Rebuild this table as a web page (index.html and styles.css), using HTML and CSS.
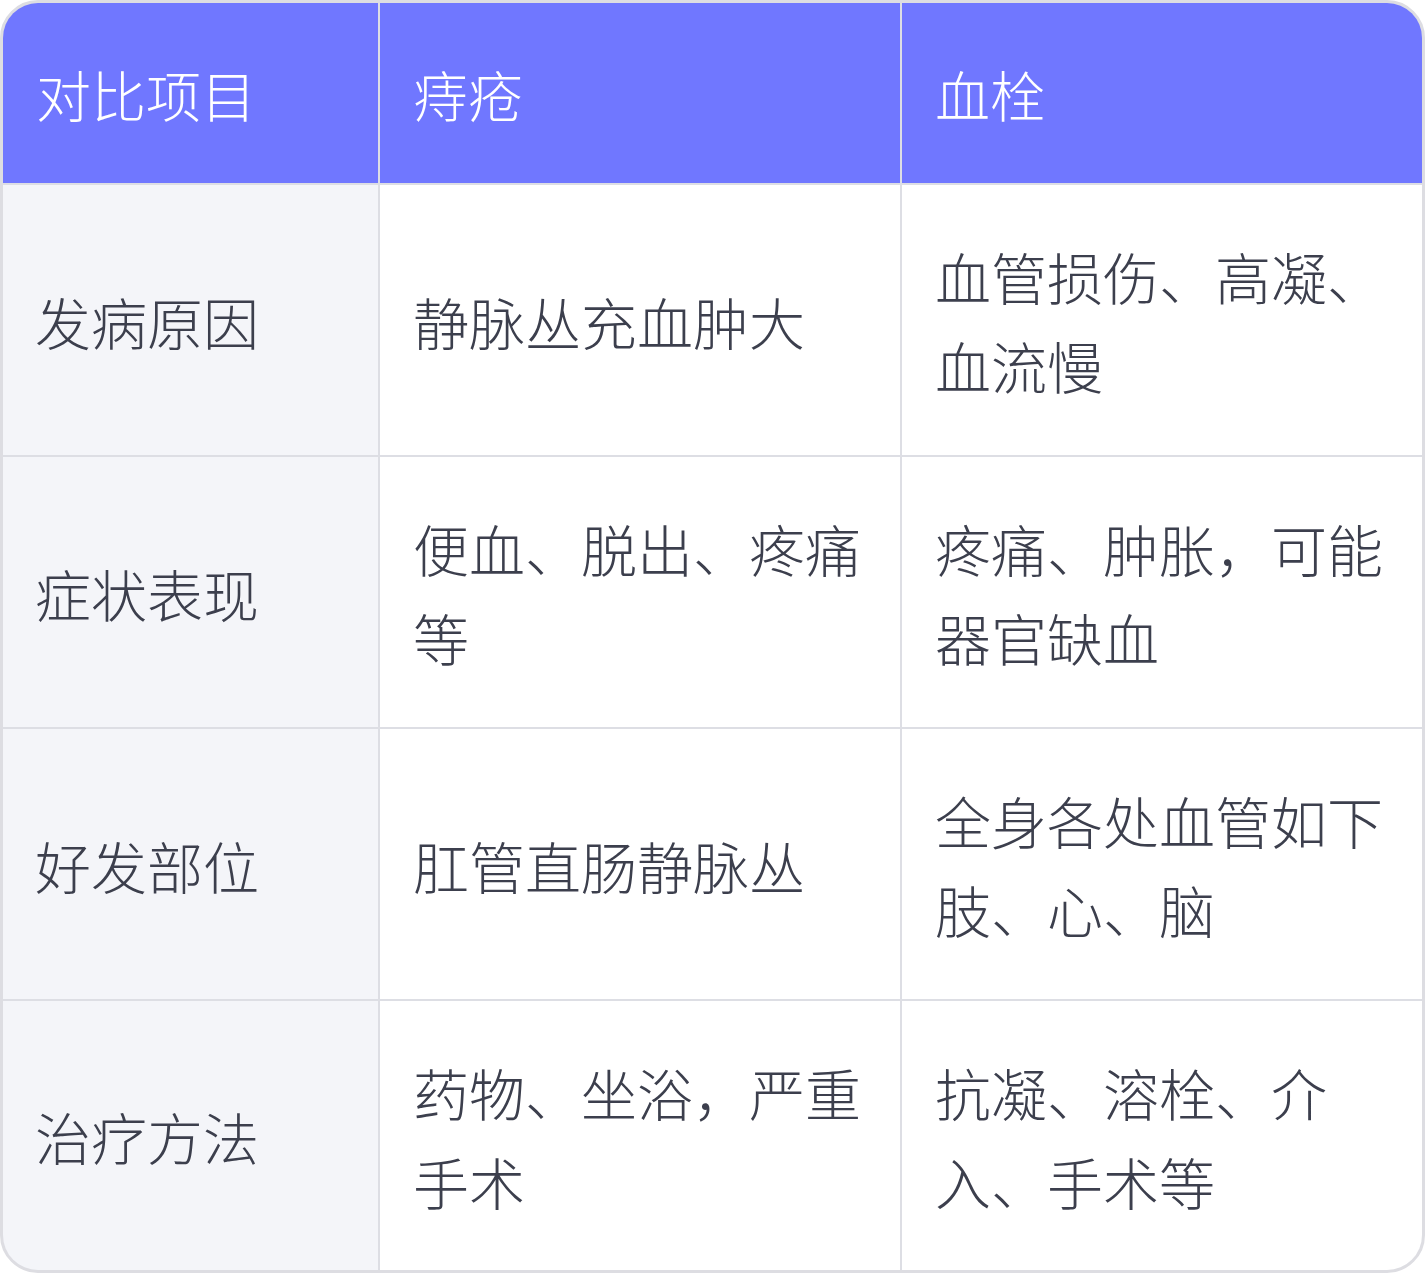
FILE: index.html
```html
<!DOCTYPE html>
<html lang="zh-CN">
<head>
<meta charset="utf-8">
<link rel="stylesheet" href="styles.css">
</head>
<body>
<div class="table">
  <div class="cell head">对比项目</div>
  <div class="cell head">痔疮</div>
  <div class="cell head">血栓</div>

  <div class="cell key">发病原因</div>
  <div class="cell">静脉丛充血肿大</div>
  <div class="cell">血管损伤、高凝、血流慢</div>

  <div class="cell key">症状表现</div>
  <div class="cell">便血、脱出、疼痛等</div>
  <div class="cell">疼痛、肿胀，可能器官缺血</div>

  <div class="cell key">好发部位</div>
  <div class="cell">肛管直肠静脉丛</div>
  <div class="cell">全身各处血管如下肢、心、脑</div>

  <div class="cell key">治疗方法</div>
  <div class="cell">药物、坐浴，严重手术</div>
  <div class="cell">抗凝、溶栓、介入、手术等</div>
</div>
</body>
</html>
```
FILE: styles.css
```css
html, body {
  margin: 0;
  padding: 0;
  background: #ffffff;
}
body {
  width: 1425px;
  height: 1273px;
  font-family: "Noto Sans CJK SC", "Noto Sans", sans-serif;
}
.table {
  box-sizing: border-box;
  width: 1425px;
  height: 1273px;
  border: 3px solid #dddde2;
  border-radius: 38px;
  overflow: hidden;
  display: grid;
  grid-template-columns: 375px 520px 1fr;
  grid-template-rows: 180px 270px 270px 270px 1fr;
  gap: 2px;
  background: #dddee4;
}
.cell {
  display: flex;
  align-items: center;
  padding: 0 34px 0 33px;
  background: #ffffff;
  color: #3c3f4d;
  font-size: 56px;
  line-height: 89px;
  font-weight: 300;
}
.head {
  background: #7077ff;
  color: #ffffff;
  font-size: 55px;
}
.key {
  background: #f4f5f9;
  padding-left: 32px;
}
```
